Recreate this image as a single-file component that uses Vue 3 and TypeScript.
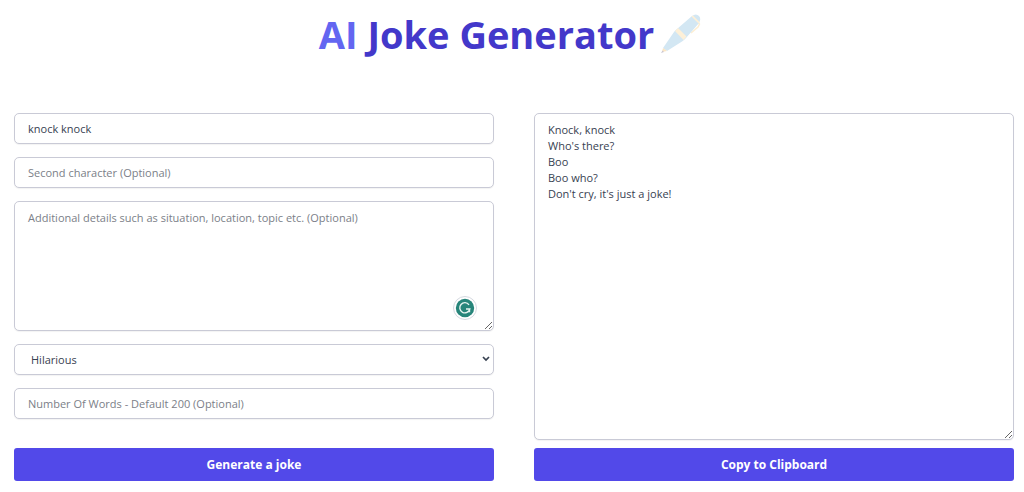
<script setup lang="ts">
import { ref } from 'vue'

const first = ref('knock knock')
const second = ref('')
const details = ref('')
const tone = ref('Hilarious')
const tones: string[] = ['Hilarious', 'Sarcastic', 'Silly', 'Dry']
const words = ref('')
const joke = ref("Knock, knock\nWho's there?\nBoo\nBoo who?\nDon't cry, it's just a joke!")

function copyJoke(): void {
  navigator.clipboard?.writeText(joke.value)
}
</script>

<template>
  <main class="page">
    <h1 class="title">
      <span><span class="accent">AI</span> Joke Generator</span>
      <svg class="pen" viewBox="0 0 40 40" aria-hidden="true">
        <path d="M37 8 L38.500 10 L37 13 L30 19" fill="none" stroke="#fdeed2" stroke-width="1.500" />
        <path d="M2 34 L13 18 Q14 16.500 16 15 L31 2 Q35 -1 38 2 Q40.500 5 38 9 L25 24 Q23 26 21 27.500 L6 37 Z" fill="#d3e7f3" />
        <path d="M14 17 L17 14 L25.500 22.500 L22.500 26 Z" fill="#fdf0d8" />
        <path d="M30.500 2.500 L32 1.500 L38.500 8 L37.500 9.500 Z" fill="#fdf0d8" />
        <path d="M2 34 L1 38 L6 37 Z" fill="#fbe6c4" />
        <path d="M1.500 36.500 L0 39 L3 38 Z" fill="#c9c5d2" />
      </svg>
    </h1>
    <div class="columns">
      <form class="column" @submit.prevent>
        <div class="fields">
          <input v-model="first" class="field" type="text" aria-label="First character" />
          <input v-model="second" class="field" type="text" aria-label="Second character" placeholder="Second character (Optional)" />
          <div class="details">
            <textarea
              v-model="details"
              class="field area"
              aria-label="Additional details"
              placeholder="Additional details such as situation, location, topic etc. (Optional)"
            ></textarea>
            <button class="checker" type="button" aria-label="Check writing">
              <svg viewBox="0 0 24 24" aria-hidden="true">
                <circle cx="12" cy="12" r="11.500" fill="#fff" stroke="#d5d9e0" />
                <circle cx="12" cy="12" r="9.200" fill="#27857a" />
                <path d="M16 8.800 A5.100 5.100 0 1 0 16.800 13 H13 M16.500 12.400 V16.200" fill="none" stroke="#e6f3f0" stroke-width="1.400" />
              </svg>
            </button>
          </div>
          <div class="picker">
            <select v-model="tone" class="field select" aria-label="Tone">
              <option v-for="item in tones" :key="item">{{ item }}</option>
            </select>
            <svg class="chevron" viewBox="0 0 8 6" aria-hidden="true">
              <path d="M1 1 L4 4 L7 1" fill="none" stroke="#374151" stroke-width="1.700" />
            </svg>
          </div>
          <input v-model="words" class="field" type="text" aria-label="Number of words" placeholder="Number Of Words - Default 200 (Optional)" />
        </div>
        <button class="action" type="submit">Generate a joke</button>
      </form>
      <section class="column result">
        <textarea v-model="joke" class="field area output" aria-label="Generated joke"></textarea>
        <button class="action" type="button" @click="copyJoke">Copy to Clipboard</button>
      </section>
    </div>
  </main>
</template>

<style>
body {
  margin: 0;
  background: #fff;
}
</style>

<style scoped>
.page {
  box-sizing: border-box;
  padding: 8px 10px 11px 14px;
  font-family: "Open Sans", "Noto Sans", sans-serif;
}
.title {
  display: flex;
  justify-content: center;
  align-items: center;
  gap: 7px;
  margin: 0 4px 53px 0;
  padding-right: 4px;
  font-size: 38px;
  line-height: 52px;
  font-weight: 700;
  color: #4338ca;
}
.accent {
  color: #6366f1;
}
.pen {
  width: 40px;
  height: 40px;
}
.columns {
  display: grid;
  grid-template-columns: 1fr 1fr;
  gap: 40px;
}
.column {
  display: flex;
  flex-direction: column;
  justify-content: space-between;
  gap: 29px;
  min-width: 0;
}
.result {
  gap: 8px;
}
.fields {
  display: flex;
  flex-direction: column;
  gap: 13px;
}
.field {
  display: block;
  box-sizing: border-box;
  width: 100%;
  height: 31px;
  margin: 0;
  padding: 0 13px;
  border: 1px solid #c9cad6;
  border-radius: 5px;
  background: #fff;
  box-shadow: 0 1px 1px #0000000d;
  color: #374151;
  font-family: inherit;
  font-size: 11px;
  line-height: 16px;
}
.field::placeholder {
  color: #7b8088;
  opacity: 1;
}
.details,
.picker {
  position: relative;
}
.area {
  height: 130px;
  padding: 8px 13px;
  resize: both;
}
.output {
  flex: 1;
  height: auto;
}
.checker {
  position: absolute;
  right: 17px;
  bottom: 11px;
  width: 24px;
  height: 24px;
  padding: 0;
  border: 0;
  background: none;
}
.checker svg {
  display: block;
}
.select {
  appearance: none;
  padding: 0 16px;
}
.chevron {
  position: absolute;
  right: 4px;
  top: 12px;
  width: 8px;
  height: 6px;
  pointer-events: none;
}
.action {
  height: 33px;
  padding: 0;
  border: 0;
  border-radius: 3px;
  background: #5249e9;
  color: #fff;
  font-family: inherit;
  font-size: 12px;
  font-weight: 700;
  cursor: pointer;
}
</style>
